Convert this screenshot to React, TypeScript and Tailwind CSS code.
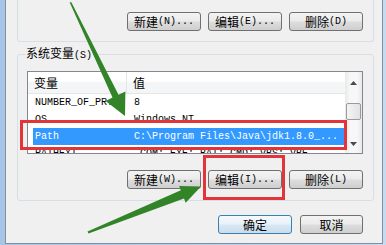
import React from 'react';

const cjk = "font-['Noto_Sans_CJK_SC',sans-serif]";
const mono = "font-['Liberation_Mono','Noto_Sans_CJK_SC',monospace]";

function Btn({ zh, hot, w = 'w-[74px]', primary = false }: { zh: string; hot?: string; w?: string; primary?: boolean }) {
  return (
    <div
      className={`${w} h-[19px] rounded-[3px] border flex items-center justify-center ${
        primary
          ? 'border-[#3c7fb1] bg-[linear-gradient(#f4f9fd_0%,#e9f2f9_48%,#d9e8f4_52%,#cadced_100%)]'
          : 'border-[#707070] bg-[linear-gradient(#f3f3f3_0%,#ebebeb_48%,#dddddd_52%,#cfcfcf_100%)]'
      }`}
    >
      <span className={`${cjk} text-[12px] leading-[14px]`}>{zh}</span>
      {hot && <span className={`${mono} text-[10px] leading-[14px]`}>{hot}</span>}
    </div>
  );
}

export default function App() {
  const rows = [
    { name: 'NUMBER_OF_PR.', value: '8' },
    { name: 'OS', value: 'Windows_NT' },
    { name: 'Path', value: 'C:\\Program Files\\Java\\jdk1.8.0_...', selected: true },
    { name: 'PATHEXT', value: '.COM;.EXE;.BAT;.CMD;.VBS;.VBE' },
  ];

  return (
    <div className={`relative w-[386px] h-[245px] overflow-hidden bg-[linear-gradient(90deg,#a8c5e7,#c6daf0)] ${cjk} text-[12px] text-black`}>
      <div className="ml-[5px] w-[378px] h-[244px] bg-[#f0f0f0] border-x border-b border-[#7f90a3] pl-[11px] pr-[8px]">
        {/* user variables group (cut off at the top) */}
        <div className="h-[42px] border-x border-b border-[#d5dfe5] rounded-b-[3px] flex justify-end items-start pt-[12px] pr-[10px] gap-[7px]">
          <Btn zh="新建" hot="(N)..." />
          <Btn zh="编辑" hot="(E)..." />
          <Btn zh="删除" hot="(D)" />
        </div>

        {/* system variables group */}
        <fieldset className="mt-[4px] border border-[#d5dfe5] rounded-[3px] p-0 pb-[11px]">
          <legend className="ml-[7px] px-[1px] leading-[14px]">
            系统变量<span className={`${mono} text-[10px]`}>(S)</span>
          </legend>

          <div className="mt-[8px] ml-[9px] w-[336px] h-[83px] border border-[#828790] bg-white flex">
            <div className="flex-1 overflow-hidden">
              <div className="h-[22px] flex border-b border-[#e5e5e5] bg-[linear-gradient(#ffffff_0%,#ffffff_45%,#f4f5f7_46%,#f4f5f7_100%)]">
                <div className="w-[99px] pl-[6px] flex items-center border-r border-[#e5e5e5]">变量</div>
                <div className="pl-[6px] flex items-center">值</div>
              </div>
              {rows.map((r, i) => (
                <div
                  key={i}
                  className={`ml-[5px] h-[17px] flex items-center ${mono} text-[10px] whitespace-nowrap ${
                    r.selected ? 'bg-[#3399ff] text-white' : ''
                  }`}
                >
                  <span className="w-[101px] pl-[2px] overflow-hidden">{r.name}</span>
                  <span>{r.value}</span>
                </div>
              ))}
            </div>

            {/* scrollbar */}
            <div className="w-[17px] flex flex-col bg-[linear-gradient(90deg,#e9e9e9,#f7f7f7_30%,#f7f7f7_70%,#e9e9e9)]">
              <div className="h-[17px] flex items-end justify-center pb-[4px]">
                <svg width="7" height="4" viewBox="0 0 7 4">
                  <polygon points="3.5,0 7,4 0,4" fill="#4a4a4a" />
                </svg>
              </div>
              <div className="mt-[14px] mx-[1px] h-[17px] rounded-[2px] border border-[#9a9a9a] bg-[linear-gradient(90deg,#f4f4f4,#e2e2e2)]" />
              <div className="flex-1" />
              <div className="h-[17px] flex items-start justify-center pt-[6px]">
                <svg width="7" height="4" viewBox="0 0 7 4">
                  <polygon points="0,0 7,0 3.5,4" fill="#4a4a4a" />
                </svg>
              </div>
            </div>
          </div>

          <div className="mt-[16px] flex justify-end pr-[10px] gap-[7px]">
            <Btn zh="新建" hot="(W)..." />
            <Btn zh="编辑" hot="(I)..." />
            <Btn zh="删除" hot="(L)" />
          </div>
        </fieldset>

        <div className="mt-[14px] flex justify-end pr-[11px] gap-[8px]">
          <Btn zh="确定" primary />
          <Btn zh="取消" w="w-[63px]" />
        </div>
      </div>

      {/* annotations */}
      <div className="absolute left-[20px] top-[120px] w-[327px] h-[30px] border-[3px] border-[#e3343a]" />
      <div className="absolute left-[203px] top-[155px] w-[82px] h-[45px] border-[3px] border-[#e3343a]" />
      <svg className="absolute inset-0 pointer-events-none" width="386" height="245" viewBox="0 0 386 245">
        <polygon
          points="69.5,2 71.5,2.5 118.5,94.8 125.4,91.4 125,116 105.6,101 112.5,97.6"
          fill="#338429"
        />
        <polygon
          points="87.5,231.5 88.5,233.5 184,198.6 185.7,202.8 201,186.5 179.1,186 180.8,190.2"
          fill="#338429"
        />
      </svg>
    </div>
  );
}
